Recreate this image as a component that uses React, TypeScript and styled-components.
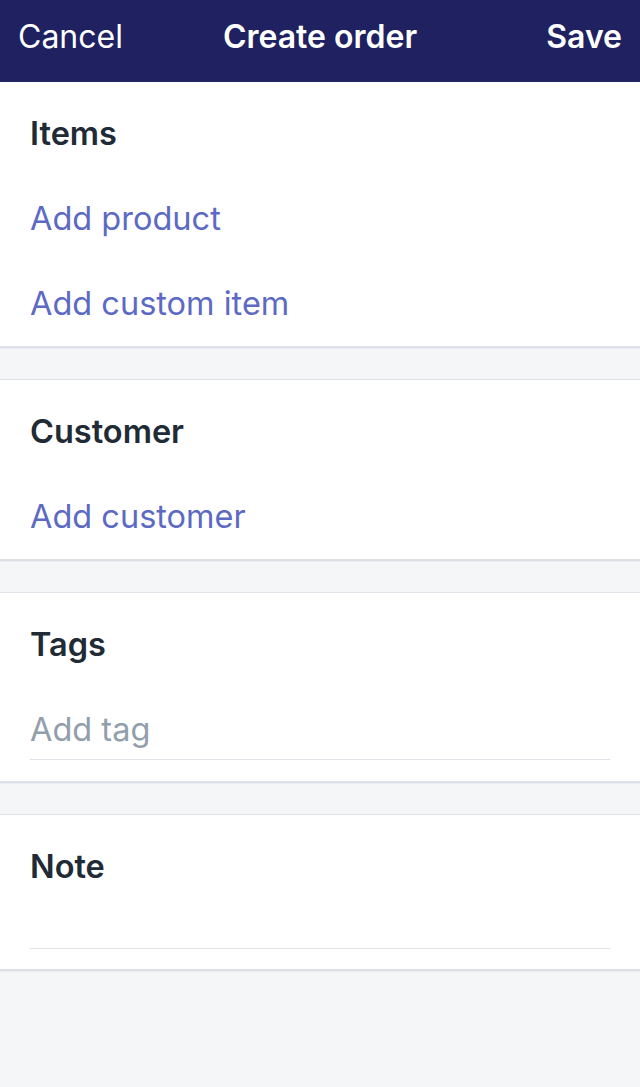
import React from "react";
import styled, { createGlobalStyle } from "styled-components";

const GlobalStyle = createGlobalStyle`
  html, body {
    margin: 0;
    padding: 0;
    background: #f4f6f8;
    font-family: Inter, "Noto Sans", "Liberation Sans", sans-serif;
    -webkit-font-smoothing: antialiased;
  }
  * { box-sizing: border-box; }
`;

const Page = styled.div`
  width: 640px;
  min-height: 1087px;
  background: #f4f6f8;
  display: flex;
  flex-direction: column;
`;

const TopBar = styled.header`
  height: 82px;
  background: #1f2161;
  display: grid;
  grid-template-columns: 1fr auto 1fr;
  align-items: center;
  padding: 0 18px 10px 18px;
  color: #ffffff;
  font-size: 32px;
`;

const BarButton = styled.button<{ $align: "left" | "right"; $bold?: boolean }>`
  background: none;
  border: none;
  padding: 0;
  color: #ffffff;
  font-family: inherit;
  font-size: 32px;
  font-weight: ${(p) => (p.$bold ? 600 : 400)};
  justify-self: ${(p) => (p.$align === "left" ? "start" : "end")};
`;

const Title = styled.h1`
  margin: 0;
  font-size: 32px;
  font-weight: 600;
`;

const Sections = styled.main`
  display: flex;
  flex-direction: column;
  gap: 31px;
`;

const Card = styled.section<{ $first?: boolean; $padBottom?: number }>`
  background: #ffffff;
  padding: 9px 30px ${(p) => p.$padBottom ?? 0}px 30px;
  border-top: ${(p) => (p.$first ? "none" : "1px solid #dfe3e8")};
  border-bottom: 2px solid #dde1e7;
  box-shadow: 0 1px 0 #e9ecf0;
  display: flex;
  flex-direction: column;
`;

const Heading = styled.h2`
  margin: 0;
  height: 85px;
  line-height: 85px;
  font-size: 32.5px;
  font-weight: 600;
  color: #212b36;
`;

const LinkRow = styled.a`
  display: block;
  height: 85px;
  line-height: 85px;
  font-size: 32.5px;
  font-weight: 400;
  color: #5c6ac4;
  text-decoration: none;
`;

const Field = styled.input<{ $h: number }>`
  display: block;
  width: 100%;
  height: ${(p) => p.$h}px;
  border: none;
  border-bottom: 1px solid #dfe3e8;
  padding: 12px 0 0 0;
  font-family: inherit;
  font-size: 32.5px;
  color: #212b36;
  background: transparent;
  outline: none;
  &::placeholder {
    color: #919eab;
  }
`;

const NoteArea = styled.textarea`
  display: block;
  width: 100%;
  height: 40px;
  border: none;
  border-bottom: 1px solid #dfe3e8;
  padding: 0;
  resize: none;
  font-family: inherit;
  font-size: 32.5px;
  background: transparent;
  outline: none;
`;

export default function App() {
  return (
    <Page>
      <GlobalStyle />
      <TopBar>
        <BarButton $align="left">Cancel</BarButton>
        <Title>Create order</Title>
        <BarButton $align="right" $bold>
          Save
        </BarButton>
      </TopBar>
      <Sections>
        <Card $first>
          <Heading>Items</Heading>
          <LinkRow href="#">Add product</LinkRow>
          <LinkRow href="#">Add custom item</LinkRow>
        </Card>
        <Card>
          <Heading>Customer</Heading>
          <LinkRow href="#">Add customer</LinkRow>
        </Card>
        <Card $padBottom={21}>
          <Heading>Tags</Heading>
          <Field $h={73} placeholder="Add tag" />
        </Card>
        <Card $padBottom={20}>
          <Heading>Note</Heading>
          <NoteArea />
        </Card>
      </Sections>
    </Page>
  );
}
